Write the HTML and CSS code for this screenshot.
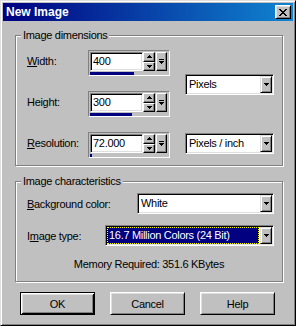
FILE: index.html
```html
<!DOCTYPE html>
<html>
<head>
<meta charset="utf-8">
<link rel="stylesheet" href="styles.css">
</head>
<body>
<div class="window">
  <div class="titlebar">
    <span class="title">New Image</span>
    <div class="close">
      <svg width="8" height="7" viewBox="0 0 8 7"><path d="M0 0h2v1H0zM6 0h2v1H6zM1 1h2v1H1zM5 1h2v1H5zM2 2h4v1H2zM3 3h2v1H3zM2 4h4v1H2zM1 5h2v1H1zM5 5h2v1H5zM0 6h2v1H0zM6 6h2v1H6z" fill="#000"/></svg>
    </div>
  </div>
  <div class="content">
    <div class="group g1">
      <span class="legend">Image dimensions</span>
      <div class="dims">
        <div class="lbl r1"><u>W</u>idth:</div>
        <div class="spin r1">
          <div class="spin-top">
            <div class="edit">400</div>
            <div class="spinbtns">
              <div class="sbtn"><svg width="5" height="3" viewBox="0 0 5 3"><path d="M2 0h1v1H2zM1 1h3v1H1zM0 2h5v1H0z"/></svg></div>
              <div class="sbtn"><svg width="5" height="3" viewBox="0 0 5 3"><path d="M0 0h5v1H0zM1 1h3v1H1zM2 2h1v1H2z"/></svg></div>
            </div>
            <div class="drop"><svg width="5" height="5" viewBox="0 0 5 5"><path d="M0 0h5v1H0zM0 2h5v1H0zM1 3h3v1H1zM2 4h1v1H2z"/></svg></div>
          </div>
          <div class="bar" style="width:44px"></div>
        </div>
        <div class="combo units">
          <div class="val">Pixels</div>
          <div class="cbtn"><svg width="5" height="3" viewBox="0 0 5 3"><path d="M0 0h5v1H0zM1 1h3v1H1zM2 2h1v1H2z"/></svg></div>
        </div>

        <div class="lbl r2">Hei<u>g</u>ht:</div>
        <div class="spin r2">
          <div class="spin-top">
            <div class="edit">300</div>
            <div class="spinbtns">
              <div class="sbtn"><svg width="5" height="3" viewBox="0 0 5 3"><path d="M2 0h1v1H2zM1 1h3v1H1zM0 2h5v1H0z"/></svg></div>
              <div class="sbtn"><svg width="5" height="3" viewBox="0 0 5 3"><path d="M0 0h5v1H0zM1 1h3v1H1zM2 2h1v1H2z"/></svg></div>
            </div>
            <div class="drop"><svg width="5" height="5" viewBox="0 0 5 5"><path d="M0 0h5v1H0zM0 2h5v1H0zM1 3h3v1H1zM2 4h1v1H2z"/></svg></div>
          </div>
          <div class="bar" style="width:42px"></div>
        </div>

        <div class="lbl r3"><u>R</u>esolution:</div>
        <div class="spin r3">
          <div class="spin-top">
            <div class="edit">72.000</div>
            <div class="spinbtns">
              <div class="sbtn"><svg width="5" height="3" viewBox="0 0 5 3"><path d="M2 0h1v1H2zM1 1h3v1H1zM0 2h5v1H0z"/></svg></div>
              <div class="sbtn"><svg width="5" height="3" viewBox="0 0 5 3"><path d="M0 0h5v1H0zM1 1h3v1H1zM2 2h1v1H2z"/></svg></div>
            </div>
            <div class="drop"><svg width="5" height="5" viewBox="0 0 5 5"><path d="M0 0h5v1H0zM0 2h5v1H0zM1 3h3v1H1zM2 4h1v1H2z"/></svg></div>
          </div>
          <div class="bar" style="width:2px"></div>
        </div>
        <div class="combo perinch">
          <div class="val">Pixels / inch</div>
          <div class="cbtn"><svg width="5" height="3" viewBox="0 0 5 3"><path d="M0 0h5v1H0zM1 1h3v1H1zM2 2h1v1H2z"/></svg></div>
        </div>
      </div>
    </div>

    <div class="group g2">
      <span class="legend">Image characteristics</span>
      <div class="row">
        <div class="lbl2"><u>B</u>ackground color:</div>
        <div class="combo bgc">
          <div class="val">White</div>
          <div class="cbtn"><svg width="5" height="3" viewBox="0 0 5 3"><path d="M0 0h5v1H0zM1 1h3v1H1zM2 2h1v1H2z"/></svg></div>
        </div>
      </div>
      <div class="row">
        <div class="lbl2">I<u>m</u>age type:</div>
        <div class="combo itype">
          <div class="val sel">16.7 Million Colors (24 Bit)</div>
          <div class="cbtn"><svg width="5" height="3" viewBox="0 0 5 3"><path d="M0 0h5v1H0zM1 1h3v1H1zM2 2h1v1H2z"/></svg></div>
        </div>
      </div>
      <div class="memory">Memory Required: 351.6 KBytes</div>
    </div>

    <div class="buttons">
      <div class="btn default">OK</div>
      <div class="btn">Cancel</div>
      <div class="btn">Help</div>
    </div>
  </div>
</div>
</body>
</html>
```

FILE: styles.css
```css
* { box-sizing: border-box; }

body {
  margin: 0;
  font-family: "Liberation Sans", Arial, sans-serif;
  font-size: 11px;
  letter-spacing: -0.3px;
  color: #000;
}

u { text-decoration: underline; text-underline-offset: 1px; }

.window {
  width: 296px;
  height: 326px;
  background: #c0c0c0;
  border: 1px solid;
  border-color: #dfdfdf #000 #000 #dfdfdf;
  box-shadow: inset 1px 1px #fff, inset -1px -1px #808080;
  padding: 2px;
}

.titlebar {
  height: 18px;
  display: flex;
  align-items: center;
  background: linear-gradient(to right, #000080, #1084d0);
  padding: 0 2px 0 3px;
}

.title {
  flex: 1;
  color: #fff;
  font-weight: bold;
  font-size: 12px;
  letter-spacing: 0;
}

.close {
  width: 16px;
  height: 14px;
  background: #c0c0c0;
  border: 1px solid;
  border-color: #fff #000 #000 #fff;
  box-shadow: inset 1px 1px #dfdfdf, inset -1px -1px #808080;
  display: flex;
  align-items: center;
  justify-content: center;
}
.close svg { display: block; margin-left: -1px; }

.content {
  padding: 14px 10px 0 12px;
}

.group {
  position: relative;
  border: 1px solid #808080;
  box-shadow: inset 1px 1px #fff, 1px 1px #fff;
}

.legend {
  position: absolute;
  top: -7px;
  left: 5px;
  padding: 0 2px;
  background: #c0c0c0;
  line-height: 13px;
}

.g1 {
  height: 131px;
  padding: 14px 8px 0 11px;
}

.dims {
  display: grid;
  grid-template-columns: 61px 82px 1fr;
  grid-template-rows: 26px 26px 26px;
  row-gap: 15px;
}

.r1 { grid-row: 1; }
.r2 { grid-row: 2; }
.r3 { grid-row: 3; }

.lbl {
  grid-column: 1;
  align-self: start;
  margin-top: 5px;
  line-height: 13px;
}

.spin {
  grid-column: 2;
  border: 1px solid;
  border-color: #808080 #fff #fff #808080;
  padding: 1px 2px 0 1px;
  display: flex;
  flex-direction: column;
}

.spin-top {
  display: flex;
  height: 19px;
}

.edit {
  width: 53px;
  height: 19px;
  background: #fff;
  border: 1px solid;
  border-color: #808080 #fff #fff #808080;
  box-shadow: inset 1px 1px #000, inset -1px -1px #dfdfdf;
  padding-left: 2px;
  line-height: 17px;
}

.spinbtns {
  width: 12px;
  display: flex;
  flex-direction: column;
}

.sbtn, .drop, .cbtn {
  background: #c0c0c0;
  border: 1px solid;
  border-color: #fff #000 #000 #fff;
  box-shadow: inset -1px -1px #808080;
  display: flex;
  align-items: center;
  justify-content: center;
}
.sbtn { flex: 1; }
.sbtn svg, .drop svg, .cbtn svg { display: block; }

.drop {
  width: 11px;
  margin-left: 1px;
}

.bar {
  height: 3px;
  margin-top: 1px;
  background: #000080;
}

.combo {
  height: 21px;
  background: #fff;
  border: 1px solid;
  border-color: #808080 #fff #fff #808080;
  box-shadow: inset 1px 1px #000, inset -1px -1px #dfdfdf;
  padding: 1px;
  display: flex;
}

.combo .val {
  flex: 1;
  padding-left: 2px;
  line-height: 17px;
  white-space: nowrap;
}

.cbtn {
  width: 12px;
  border-color: #dfdfdf #000 #000 #dfdfdf;
  box-shadow: inset 1px 1px #fff, inset -1px -1px #808080;
}

.units {
  grid-column: 3;
  grid-row: 1 / 3;
  justify-self: end;
  align-self: center;
  margin-top: 2px;
  width: 89px;
}

.perinch {
  grid-column: 3;
  grid-row: 3;
  justify-self: end;
  align-self: start;
  margin-top: 1px;
  width: 89px;
}

.g2 {
  margin-top: 15px;
  height: 101px;
  padding: 11px 8px 0 11px;
}

.row {
  display: flex;
  justify-content: space-between;
  align-items: center;
}
.row + .row { margin-top: 11px; }

.lbl2 {
  line-height: 13px;
  padding-top: 2px;
}

.bgc { width: 137px; }
.itype { width: 169px; }

.combo .val.sel {
  background: linear-gradient(#000080, #000080) padding-box, linear-gradient(#000, #000) border-box;
  border: 1px dotted #ffff00;
  color: #fff;
  padding-left: 1px;
  line-height: 15px;
  margin-right: 1px;
}

.memory {
  margin: 12px -8px 0 -11px;
  text-align: center;
  line-height: 13px;
}

.buttons {
  display: flex;
  gap: 15px;
  margin-top: 10px;
  padding-left: 5px;
}

.btn {
  width: 75px;
  height: 23px;
  background: #c0c0c0;
  border: 1px solid;
  border-color: #fff #000 #000 #fff;
  box-shadow: inset 1px 1px #dfdfdf, inset -1px -1px #808080;
  display: flex;
  align-items: center;
  justify-content: center;
}

.btn.default {
  border: 1px solid #000;
  box-shadow: inset 1px 1px #fff, inset -1px -1px #000, inset 2px 2px #dfdfdf, inset -2px -2px #808080;
}
```
